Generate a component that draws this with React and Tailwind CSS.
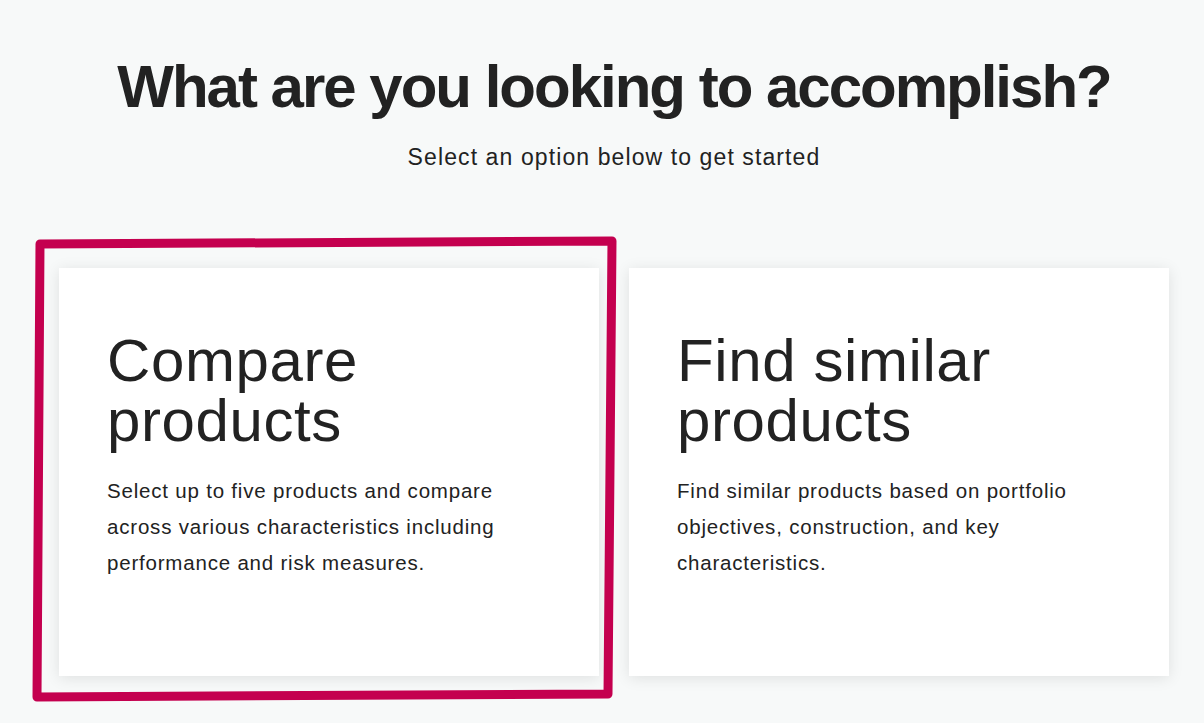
import React from 'react';

const cards = [
  {
    title: ['Compare', 'products'],
    body: 'Select up to five products and compare across various characteristics including performance and risk measures.',
  },
  {
    title: ['Find similar', 'products'],
    body: 'Find similar products based on portfolio objectives, construction, and key characteristics.',
  },
];

function OptionCard({ title, body }) {
  return (
    <div className="w-[540px] h-[408px] bg-white shadow-[0_2px_14px_rgba(0,0,0,0.10)] pl-[48px] pr-[60px] pt-[63px]">
      <h2 className="text-[60px] leading-[60px] tracking-[0.6px] font-normal text-[#222]">
        {title[0]}
        <br />
        {title[1]}
      </h2>
      <p className="mt-[22px] text-[20.5px] leading-[36px] tracking-[0.8px] text-[#222]">{body}</p>
    </div>
  );
}

export default function App() {
  return (
    <div
      className="relative min-h-[723px] bg-[#f7f9f9] pl-[24px] flex flex-col items-center overflow-hidden"
      style={{ fontFamily: '"Liberation Sans", Arial, sans-serif' }}
    >
      <h1 className="pt-[48px] text-[60px] leading-[77px] font-bold text-[#222] tracking-[-2px]">
        What are you looking to accomplish?
      </h1>
      <p className="mt-[17px] text-[23px] leading-[30px] tracking-[1.1px] text-[#222]">
        Select an option below to get started
      </p>

      <div className="mt-[96px] flex gap-[30px]">
        {cards.map((c) => (
          <OptionCard key={c.body} title={c.title} body={c.body} />
        ))}
      </div>

      {/* selection annotation */}
      <svg className="absolute inset-0 pointer-events-none" width="1204" height="723">
        <polygon
          points="40,244 612,241 608,694 37,697"
          fill="none"
          stroke="#c4004f"
          strokeWidth="9"
          strokeLinejoin="round"
        />
      </svg>
    </div>
  );
}
